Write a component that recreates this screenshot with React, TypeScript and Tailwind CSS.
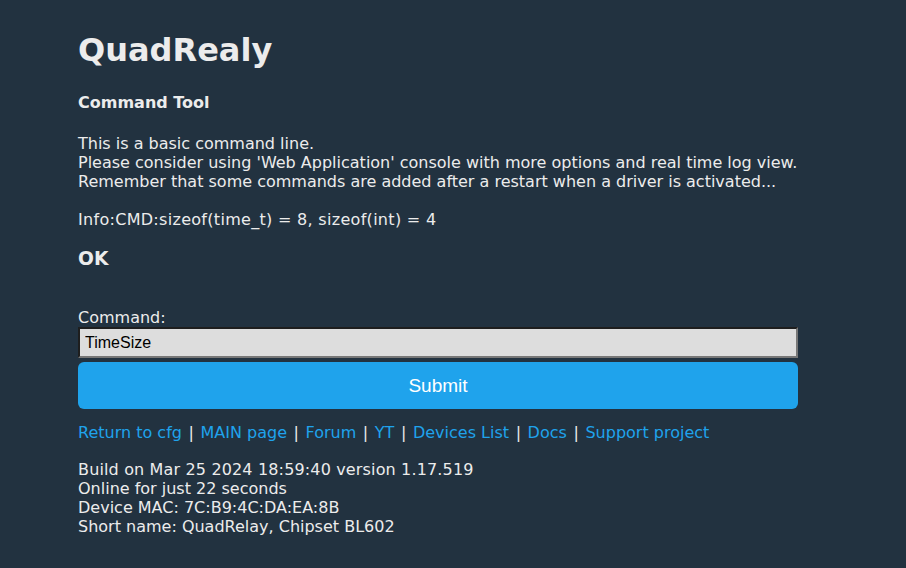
export default function App() {
  const links = ["Return to cfg", "MAIN page", "Forum", "YT", "Devices List", "Docs", "Support project"]
  return (
    <div className="min-h-[568px] w-full bg-[#223240] text-[#ececec] font-['DejaVu_Sans',Verdana,sans-serif] text-[16px] leading-[19px]">
      <div className="ml-[78px] w-[720px] pt-[30px]">
        <h1 className="text-[32px] leading-[40px] font-bold">QuadRealy</h1>
        <h4 className="mt-[23px] font-bold">Command Tool</h4>
        <div className="mt-[22px]">
          This is a basic command line.
          <br />
          Please consider using 'Web Application' console with more options and real time log view.
          <br />
          Remember that some commands are added after a restart when a driver is activated...
          <br />
          <br />
          <span className="tracking-[0.3px]">Info:CMD:sizeof(time_t) = 8, sizeof(int) = 4</span>
        </div>
        <h3 className="mt-[19px] text-[18.7px] leading-[22px] font-bold">OK</h3>
        <div className="mt-[38px]">
          <label className="block">Command:</label>
          <input
            defaultValue="TimeSize"
            className="block w-full h-[31px] px-[5px] bg-[#dddddd] text-black font-['Liberation_Sans',Arial,sans-serif] text-[16px] border-2 border-t-[#1e1e1e] border-l-[#1e1e1e] border-r-[#777777] border-b-[#777777] outline-none"
          />
          <button className="mt-[4px] w-full h-[47px] rounded-[6px] bg-[#1fa3ec] text-white font-['Liberation_Sans',Arial,sans-serif] text-[19px]">
            Submit
          </button>
        </div>
        <div className="mt-[14px]">
          {links.map((l, i) => (
            <span key={l}>
              {i > 0 && <span className="mx-[1.5px]"> | </span>}
              <a href="#" className="text-[#1fa3ec]">
                {l}
              </a>
            </span>
          ))}
        </div>
        <div className="mt-[18px]">
          <span className="tracking-[0.15px]">Build on Mar 25 2024 18:59:40 version 1.17.519</span>
          <br />
          Online for just 22 seconds
          <br />
          Device MAC: 7C:B9:4C:DA:EA:8B
          <br />
          Short name: QuadRelay, Chipset BL602
        </div>
      </div>
    </div>
  )
}
